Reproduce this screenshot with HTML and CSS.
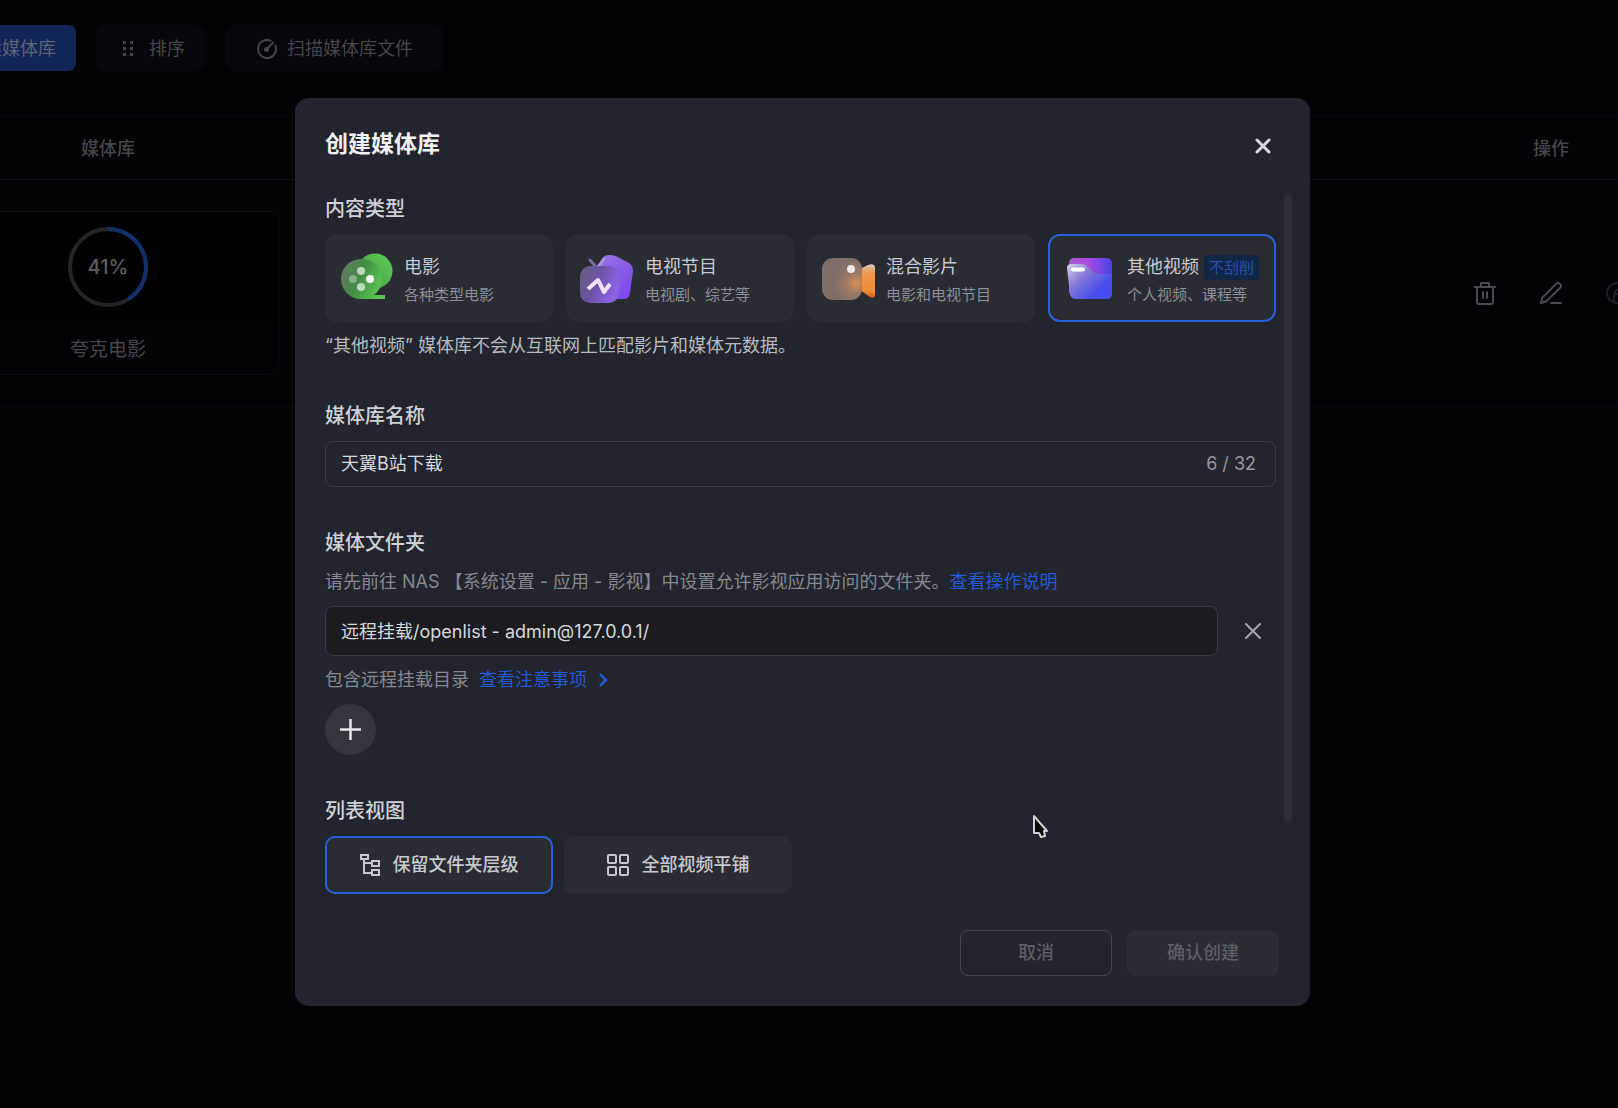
FILE: index.html
```html
<!DOCTYPE html>
<html lang="zh-CN">
<head>
    <meta charset="UTF-8">
    <title>创建媒体库</title>
    <link rel="stylesheet" href="styles.css">
</head>
<body>
    <div class="page">
        <div class="toolbar">
            <button type="button" class="tool-btn tool-primary">创建媒体库</button>
            <button type="button" class="tool-btn tool-sort">
                <svg width="12" height="18" viewBox="0 0 12 18" fill="currentColor"><path d="M1 1h3v3H1zM8 1h3v3H8zM1 7h3v3H1zM8 7h3v3H8zM1 13h3v3H1zM8 13h3v3H8z"/></svg>
                排序
            </button>
            <button type="button" class="tool-btn tool-scan">
                <svg width="20" height="20" viewBox="0 0 20 20" fill="none" stroke="currentColor" stroke-width="2" stroke-linecap="round"><path d="M13.500 1.700A9 9 0 1 0 18.300 6.500M10 10l6-6.500"/><circle cx="9.500" cy="10.500" r="1.500" fill="currentColor"/></svg>
                扫描媒体库文件
            </button>
        </div>
        <table class="lib-table">
            <thead>
                <tr>
                    <th class="col-lib">媒体库</th>
                    <th></th>
                    <th class="col-act">操作</th>
                </tr>
            </thead>
            <tbody>
                <tr>
                    <td>
                        <div class="lib-card">
                            <div class="lib-cover">
                                <div class="progress">
                                    <svg width="82" height="82" viewBox="0 0 82 82" fill="none" stroke-width="4">
                                        <circle cx="41" cy="41" r="38" stroke="#242428"/>
                                        <path d="M41 3A38 38 0 0 1 61.400 73.100" stroke="#12306e"/>
                                    </svg>
                                    <span class="progress-num">41%</span>
                                </div>
                            </div>
                            <div class="lib-name">夸克电影</div>
                        </div>
                    </td>
                    <td></td>
                    <td>
                        <div class="actions">
                            <button type="button" class="icon-btn" aria-label="删除">
                                <svg width="24" height="24" viewBox="0 0 24 24" fill="none" stroke="currentColor" stroke-width="2" stroke-linecap="round" stroke-linejoin="round"><path d="M2 6h20M8 6V2h8v4M4 6v15q0 2 2 2h12q2 0 2-2V6M10 11v6M14 11v6"/></svg>
                            </button>
                            <button type="button" class="icon-btn" aria-label="编辑">
                                <svg width="24" height="24" viewBox="0 0 24 24" fill="none" stroke="currentColor" stroke-width="2" stroke-linecap="round" stroke-linejoin="round"><path d="M2 22l1-5L17 3q2-2 4 0t0 4L7 20.500zM12 22h10"/></svg>
                            </button>
                            <button type="button" class="icon-btn icon-dim" aria-label="权限">
                                <svg width="24" height="24" viewBox="0 0 24 24" fill="none" stroke="currentColor" stroke-width="2"><circle cx="12" cy="12" r="10"/><path d="M9 22V13h6v9M10 13v-2q0-2 2-2t2 2v2"/></svg>
                            </button>
                        </div>
                    </td>
                </tr>
            </tbody>
        </table>
    </div>

    <div class="overlay">
        <form class="modal" role="dialog" aria-labelledby="modal-title">
            <div class="modal-head">
                <h1 class="modal-title" id="modal-title">创建媒体库</h1>
                <button type="button" class="icon-btn close-btn" aria-label="关闭">
                    <svg width="16" height="16" viewBox="0 0 16 16" fill="none" stroke="currentColor" stroke-width="3" stroke-linecap="round"><path d="M2 2l12 12M14 2L2 14"/></svg>
                </button>
            </div>

            <div class="modal-body">
                <section class="section">
                    <h2 class="section-title">内容类型</h2>
                    <div class="types">
                        <label class="type-card">
                            <input type="radio" name="type" class="pick">
                            <svg class="type-icon" viewBox="0 0 54 54">
                                <defs>
                                    <linearGradient id="g1" x1="0" y1="1" x2="1" y2="0"><stop offset="0" stop-color="#3d8f42"/><stop offset="1" stop-color="#62d257"/></linearGradient>
                                    <linearGradient id="g2" x1="0" y1="0" x2="1" y2="0.400"><stop offset="0" stop-color="#6b766c"/><stop offset="0.500" stop-color="#438b45"/><stop offset="1" stop-color="#58c351"/></linearGradient>
                                </defs>
                                <circle cx="35" cy="20" r="17.500" fill="url(#g1)"/>
                                <path d="M21 8a20 20 0 1 0 0 40h24v-4H34a20 20 0 0 0-13-36z" fill="url(#g2)"/>
                                <g fill="#fff"><circle cx="21" cy="20" r="4" opacity=".65"/><circle cx="13" cy="28" r="4" opacity=".35"/><circle cx="30" cy="28" r="4" opacity=".95"/><circle cx="21" cy="36" r="4" opacity=".65"/></g>
                            </svg>
                            <span class="type-text">
                                <span class="type-name">电影</span>
                                <span class="type-desc">各种类型电影</span>
                            </span>
                        </label>
                        <label class="type-card">
                            <input type="radio" name="type" class="pick">
                            <svg class="type-icon" viewBox="0 0 54 54">
                                <defs>
                                    <linearGradient id="g3" x1="0" y1="0" x2="1" y2="1"><stop offset="0" stop-color="#9878e0"/><stop offset="1" stop-color="#7a45ee"/></linearGradient>
                                    <linearGradient id="g4" x1="0" y1="0" x2="1" y2="0.400"><stop offset="0" stop-color="#65607c"/><stop offset="0.500" stop-color="#6c53a5"/><stop offset="1" stop-color="#8a62e4"/></linearGradient>
                                </defs>
                                <path d="M28 4q-5 0-7 4l-8 15 18 25 12 0q5 0 6-6l3-22q0-6-4-8L35 5q-3-1-7-1z" fill="url(#g3)"/>
                                <path d="M9 9l6 7" stroke="#77709a" stroke-width="3" stroke-linecap="round"/>
                                <path d="M23 8l-6 8" stroke="#a492dc" stroke-width="3" stroke-linecap="round"/>
                                <rect x="-1" y="15" width="39" height="37" rx="10" fill="url(#g4)"/>
                                <path d="M7 38l10-9 6 12 6-8" fill="none" stroke="#f2e2ff" stroke-width="4" stroke-linejoin="round"/>
                            </svg>
                            <span class="type-text">
                                <span class="type-name">电视节目</span>
                                <span class="type-desc">电视剧、综艺等</span>
                            </span>
                        </label>
                        <label class="type-card">
                            <input type="radio" name="type" class="pick">
                            <svg class="type-icon" viewBox="0 0 54 54">
                                <defs>
                                    <linearGradient id="g5" x1="0" y1="0" x2="0" y2="1"><stop offset="0" stop-color="#d9cabd"/><stop offset="0.250" stop-color="#ee9850"/><stop offset="0.800" stop-color="#f08a35"/><stop offset="1" stop-color="#dc5a18"/></linearGradient>
                                    <radialGradient id="g6" cx="0.850" cy="0.600" r="0.600"><stop offset="0" stop-color="#d98e53"/><stop offset="0.450" stop-color="#9a7866"/><stop offset="1" stop-color="#7d6e6a"/></radialGradient>
                                </defs>
                                <path d="M38 18l8-4q6-2 7 2v29q-1 3-5 1l-10-7z" fill="url(#g5)"/>
                                <rect x="0" y="7" width="40" height="42" rx="11" fill="url(#g6)"/>
                                <circle cx="29" cy="18" r="4" fill="#efe8e4"/>
                            </svg>
                            <span class="type-text">
                                <span class="type-name">混合影片</span>
                                <span class="type-desc">电影和电视节目</span>
                            </span>
                        </label>
                        <label class="type-card">
                            <input type="radio" name="type" class="pick" checked>
                            <svg class="type-icon" viewBox="0 0 54 54">
                                <defs>
                                    <linearGradient id="g7" x1="0" y1="0" x2="1" y2="0"><stop offset="0" stop-color="#a35ad0"/><stop offset="0.400" stop-color="#b04cdc"/><stop offset="1" stop-color="#4843e8"/></linearGradient>
                                    <linearGradient id="g8" x1="0" y1="0" x2="1" y2="0.800"><stop offset="0" stop-color="#d9d3e6"/><stop offset="0.400" stop-color="#8378d8"/><stop offset="0.800" stop-color="#474ced"/></linearGradient>
                                </defs>
                                <rect x="6" y="7" width="43" height="38" rx="5" fill="url(#g7)"/>
                                <path d="M4 17q0-4 4-4h11q4 0 7 4l4 4q2 2 5 2h14v20q0 5-5 5H13q-5 0-6-5z" fill="url(#g8)"/>
                                <path d="M10 18.500h10" stroke="#fff" stroke-width="4" stroke-linecap="round"/>
                            </svg>
                            <span class="type-text">
                                <span class="type-name">其他视频<em class="tag">不刮削</em></span>
                                <span class="type-desc">个人视频、课程等</span>
                            </span>
                        </label>
                    </div>
                    <p class="note">“其他视频” 媒体库不会从互联网上匹配影片和媒体元数据。</p>
                </section>

                <section class="section">
                    <label class="section-title" for="lib-name">媒体库名称</label>
                    <div class="name-box">
                        <input type="text" id="lib-name" class="name-input" value="天翼B站下载" maxlength="32">
                        <span class="count">6 / 32</span>
                    </div>
                </section>

                <section class="section">
                    <label class="section-title" for="lib-path">媒体文件夹</label>
                    <p class="hint">请先前往 NAS 【系统设置 - 应用 - 影视】中设置允许影视应用访问的文件夹。<a href="#">查看操作说明</a></p>
                    <div class="path-row">
                        <input type="text" id="lib-path" class="path-input" value="远程挂载/openlist - admin@127.0.0.1/" readonly>
                        <button type="button" class="icon-btn path-del" aria-label="移除">
                            <svg width="18" height="18" viewBox="0 0 18 18" fill="none" stroke="currentColor" stroke-width="2" stroke-linecap="round"><path d="M2 2l14 14M16 2L2 16"/></svg>
                        </button>
                    </div>
                    <p class="hint remote">
                        <span>包含远程挂载目录</span>
                        <a href="#" class="more">查看注意事项
                            <svg width="12" height="16" viewBox="0 0 12 16" fill="none" stroke="currentColor" stroke-width="2.500"><path d="M3 2l6 6-6 6"/></svg>
                        </a>
                    </p>
                    <button type="button" class="add-btn" aria-label="添加文件夹">
                        <svg width="21" height="21" viewBox="0 0 21 21" stroke="currentColor" stroke-width="2.500"><path d="M0 10.500h21M10.500 0v21"/></svg>
                    </button>
                </section>

                <section class="section">
                    <h2 class="section-title">列表视图</h2>
                    <div class="views">
                        <label class="view-card">
                            <input type="radio" name="view" class="pick" checked>
                            <svg width="20" height="22" viewBox="0 0 20 22" fill="none" stroke="currentColor" stroke-width="2"><path d="M1 1h7v4H1zM12 7h7v5h-7zM12 16h7v5h-7zM4 5v14h8M4 9h8"/></svg>
                            保留文件夹层级
                        </label>
                        <label class="view-card">
                            <input type="radio" name="view" class="pick">
                            <svg width="22" height="22" viewBox="0 0 22 22" fill="none" stroke="currentColor" stroke-width="2"><rect x="1" y="1" width="8" height="8" rx="1"/><rect x="13" y="1" width="8" height="8" rx="1"/><rect x="1" y="13" width="8" height="8" rx="1"/><rect x="13" y="13" width="8" height="8" rx="1"/></svg>
                            全部视频平铺
                        </label>
                    </div>
                </section>
            </div>

            <div class="modal-foot">
                <button type="button" class="btn btn-cancel">取消</button>
                <button type="submit" class="btn btn-ok" disabled>确认创建</button>
            </div>

            <div class="scroll-thumb"></div>
            <svg class="cursor" width="16" height="24" viewBox="0 0 16 24"><path d="M2 2v17h5l2 4 4-1-1-5h3z" fill="#08090b" stroke="#d0d1d3" stroke-width="2" stroke-linejoin="round"/></svg>
        </form>
    </div>
</body>
</html>
```

FILE: styles.css
```css
*{box-sizing:border-box;}
body{margin:0;background-color:#020305;color:#c6c9cf;font:18px/28px Inter,"Noto Sans CJK SC",sans-serif;}
h1,h2,p{margin:0;}
button,input{font:inherit;color:inherit;}
button{padding:0;border:0;background:none;}
svg{display:block;flex:none;}
a{color:#2359d4;text-decoration:none;}
.icon-btn{display:flex;align-items:center;justify-content:center;}

/* 背景页面 */
.page{min-height:100vh;padding-top:25px;overflow:hidden;color:#454649;}
.toolbar{display:flex;gap:20px;margin-left:-56px;}
.tool-btn{display:flex;align-items:center;height:46px;border-radius:8px;background-color:#06070a;}
.tool-primary{padding:1px 20px 0 22px;background-color:#11255a;color:#5b6475;}
.tool-sort{gap:15px;padding:1px 20px 0 26px;}
.tool-scan{gap:10px;padding:1px 31px 0 32px;}
.lib-table{width:calc(100% + 142px);margin:45px 0 0 -89px;border-collapse:collapse;table-layout:fixed;}
.lib-table th{height:63px;padding:1px 0 0;border-top:1px solid #0a0b0e;border-bottom:1px solid #0e0f12;font-weight:500;}
.lib-table td{padding:31px 26px;border-bottom:1px solid #0a0b0e;}
.col-lib{width:394px;}
.col-act{width:240px;}
.lib-card{border:1px solid #0d0e11;border-radius:10px;overflow:hidden;text-align:center;}
.lib-cover{display:flex;align-items:center;justify-content:center;height:109px;background-color:#000;}
.progress{position:relative;}
.progress-num{position:absolute;inset:0;display:flex;align-items:center;justify-content:center;font-size:20px;font-weight:500;color:#5c5c5f;}
.lib-name{padding:15px 0 10px;font-size:19px;}
.actions{display:flex;justify-content:center;gap:42px;margin:0 -26px;color:#4a4b4e;}
.icon-dim{color:#1c1d20;}

/* 弹窗 */
.overlay{position:fixed;inset:0;display:flex;align-items:flex-start;justify-content:center;padding:98px 13px 0 0;overflow:auto;}
.modal{position:relative;width:1015px;max-width:100%;padding:28px 31px 30px 30px;border-radius:14px;background-color:#22252d;}
.modal-head{display:flex;align-items:center;justify-content:space-between;padding-right:8px;}
.modal-title{font-size:23px;line-height:36px;font-weight:700;color:#eff0f2;}
.close-btn{padding-top:4px;color:#d9dadd;}
.modal-body{display:flex;flex-direction:column;gap:42px;padding:33px 3px 36px 0;}
.section{display:flex;flex-direction:column;gap:10px;}
.section-title{margin-bottom:1px;font-size:20px;font-weight:500;color:#cfd1d6;}

.types{display:grid;grid-template-columns:repeat(4,1fr);gap:13px;}
.type-card{position:relative;display:flex;align-items:center;gap:10px;height:88px;padding-left:15px;border-radius:12px;background-color:#292c33;white-space:nowrap;}
.pick{position:absolute;inset:0;margin:0;border-radius:12px;appearance:none;}
.pick:checked{border:2px solid #2b60dc;}
.type-icon{width:54px;height:54px;overflow:visible;}
.type-text{padding-top:5px;}
.type-text,.type-name,.type-desc{display:block;}
.type-desc{font-size:15px;color:#8c8f95;}
.tag{display:inline-block;margin-left:5px;padding:0 5px;border-radius:4px;background-color:#142647;color:#2350ad;font-size:15px;line-height:25px;font-style:normal;}
.note{color:#b7bac0;}

.name-box,.path-input{border:1px solid #3a3c42;border-radius:8px;}
.name-box{display:flex;align-items:center;height:46px;padding:0 19px 0 15px;}
.name-input{flex:1;min-width:0;padding:0;border:0;outline:0;background:none;color:#d6d8dc;}
.count{color:#96989d;}
.hint{color:#85888e;}
.path-row{display:flex;}
.path-input{flex:1;min-width:0;height:50px;padding:0 15px 2px;outline:0;background-color:#1b1c20;color:#d6d8dc;}
.path-del{width:58px;padding-left:12px;color:#a5a7ab;}
.remote,.more{display:flex;align-items:center;gap:10px;}
.add-btn{display:flex;align-items:center;justify-content:center;width:51px;height:51px;border-radius:50%;background-color:#33363c;color:#e6e7e9;}

.views{display:flex;gap:11px;}
.view-card{position:relative;display:flex;align-items:center;justify-content:center;gap:13px;width:calc((100% - 39px) / 4);height:58px;border-radius:10px;background-color:#292c33;font-weight:500;}
.view-card .pick{border-radius:10px;}

.modal-foot{display:flex;justify-content:flex-end;gap:15px;}
.btn{width:152px;height:46px;border-radius:8px;font-weight:500;color:#5c5f66;}
.btn-cancel{border:1px solid #43464b;}
.btn-ok{background-color:#2a2d33;}
.scroll-thumb{position:absolute;top:95px;right:18px;width:8px;height:630px;border-radius:4px;background-color:#2c2f36;}
.cursor{position:absolute;left:737px;top:716px;}
```
